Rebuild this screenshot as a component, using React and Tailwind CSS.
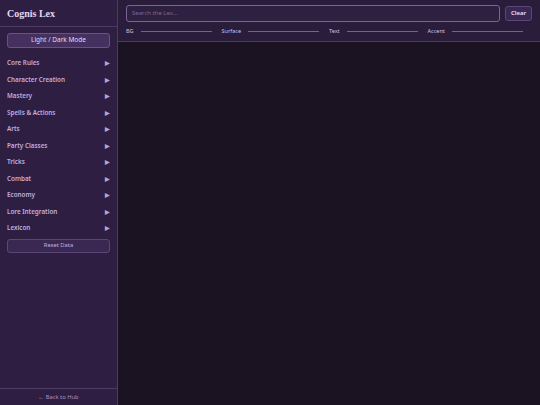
import React from 'react';

const sections = [
  'Core Rules',
  'Character Creation',
  'Mastery',
  'Spells & Actions',
  'Arts',
  'Party Classes',
  'Tricks',
  'Combat',
  'Economy',
  'Lore Integration',
  'Lexicon',
];

const swatches = ['BG', 'Surface', 'Text', 'Accent'];

export default function App() {
  return (
    <div className="flex h-[405px] w-[540px] overflow-hidden bg-[#1b1322] font-['Noto_Sans',sans-serif] text-[#d8c8ec] antialiased">
      <aside className="flex w-[118px] shrink-0 flex-col border-r border-[#4e3a66] bg-[#2e1f42]">
        <div className="flex h-[27px] items-center border-b border-[#4e3a66] px-[7px]">
          <h1 className="font-['Liberation_Serif',serif] text-[10px] font-bold text-[#e4d6f2]">Cognis Lex</h1>
        </div>
        <div className="flex px-[7px] pt-[6px]">
          <button className="block h-[15px] w-full rounded-[3px] border border-[#6a5288] bg-[#45305f] text-[6.5px] leading-none text-[#e4d6f2]">
            Light / Dark Mode
          </button>
        </div>
        <nav className="mt-[7px] flex flex-col">
          {sections.map((s) => (
            <div key={s} className="flex h-[16.5px] items-center justify-between px-[7px] text-[6.3px] font-semibold leading-none text-[#c4acde]">
              <span>{s}</span>
              <span className="text-[6px] text-[#b8a2d6]">▶</span>
            </div>
          ))}
        </nav>
        <div className="flex px-[7px] pt-[2px]">
          <button className="block h-[14px] w-full rounded-[3px] border border-[#5c4578] bg-[#3a2852] text-[5.8px] leading-none text-[#c4acde]">
            Reset Data
          </button>
        </div>
        <div className="mt-auto flex h-[17px] items-center justify-center border-t border-[#4e3a66] text-[5.8px] text-[#a890c8]">
          ← Back to Hub
        </div>
      </aside>
      <main className="flex flex-1 flex-col">
        <header className="flex h-[42px] flex-col border-b border-[#4e3a66] bg-[#2a1c3b] px-[8px] pt-[5px]">
          <div className="flex items-center gap-[5px]">
            <div className="flex h-[17px] flex-1 items-center rounded-[3px] border border-[#7a6496] bg-[#2e2040] px-[5px] text-[6px] text-[#7d6a96]">
              Search the Lex...
            </div>
            <button className="block h-[15px] w-[27px] rounded-[3px] border border-[#5c4578] bg-[#3a2852] text-[5.8px] font-bold leading-none text-[#e4d6f2]">
              Clear
            </button>
          </div>
          <div className="mt-[7px] flex items-center gap-[10px] text-[5.5px] leading-none text-[#d0c0e4]">
            {swatches.map((s) => (
              <div key={s} className="flex items-center gap-[7px]">
                <span>{s}</span>
                <span className="h-px w-[71px] bg-[#75638c]" />
              </div>
            ))}
          </div>
        </header>
        <div className="flex-1 bg-[#1b1322]" />
      </main>
    </div>
  );
}
